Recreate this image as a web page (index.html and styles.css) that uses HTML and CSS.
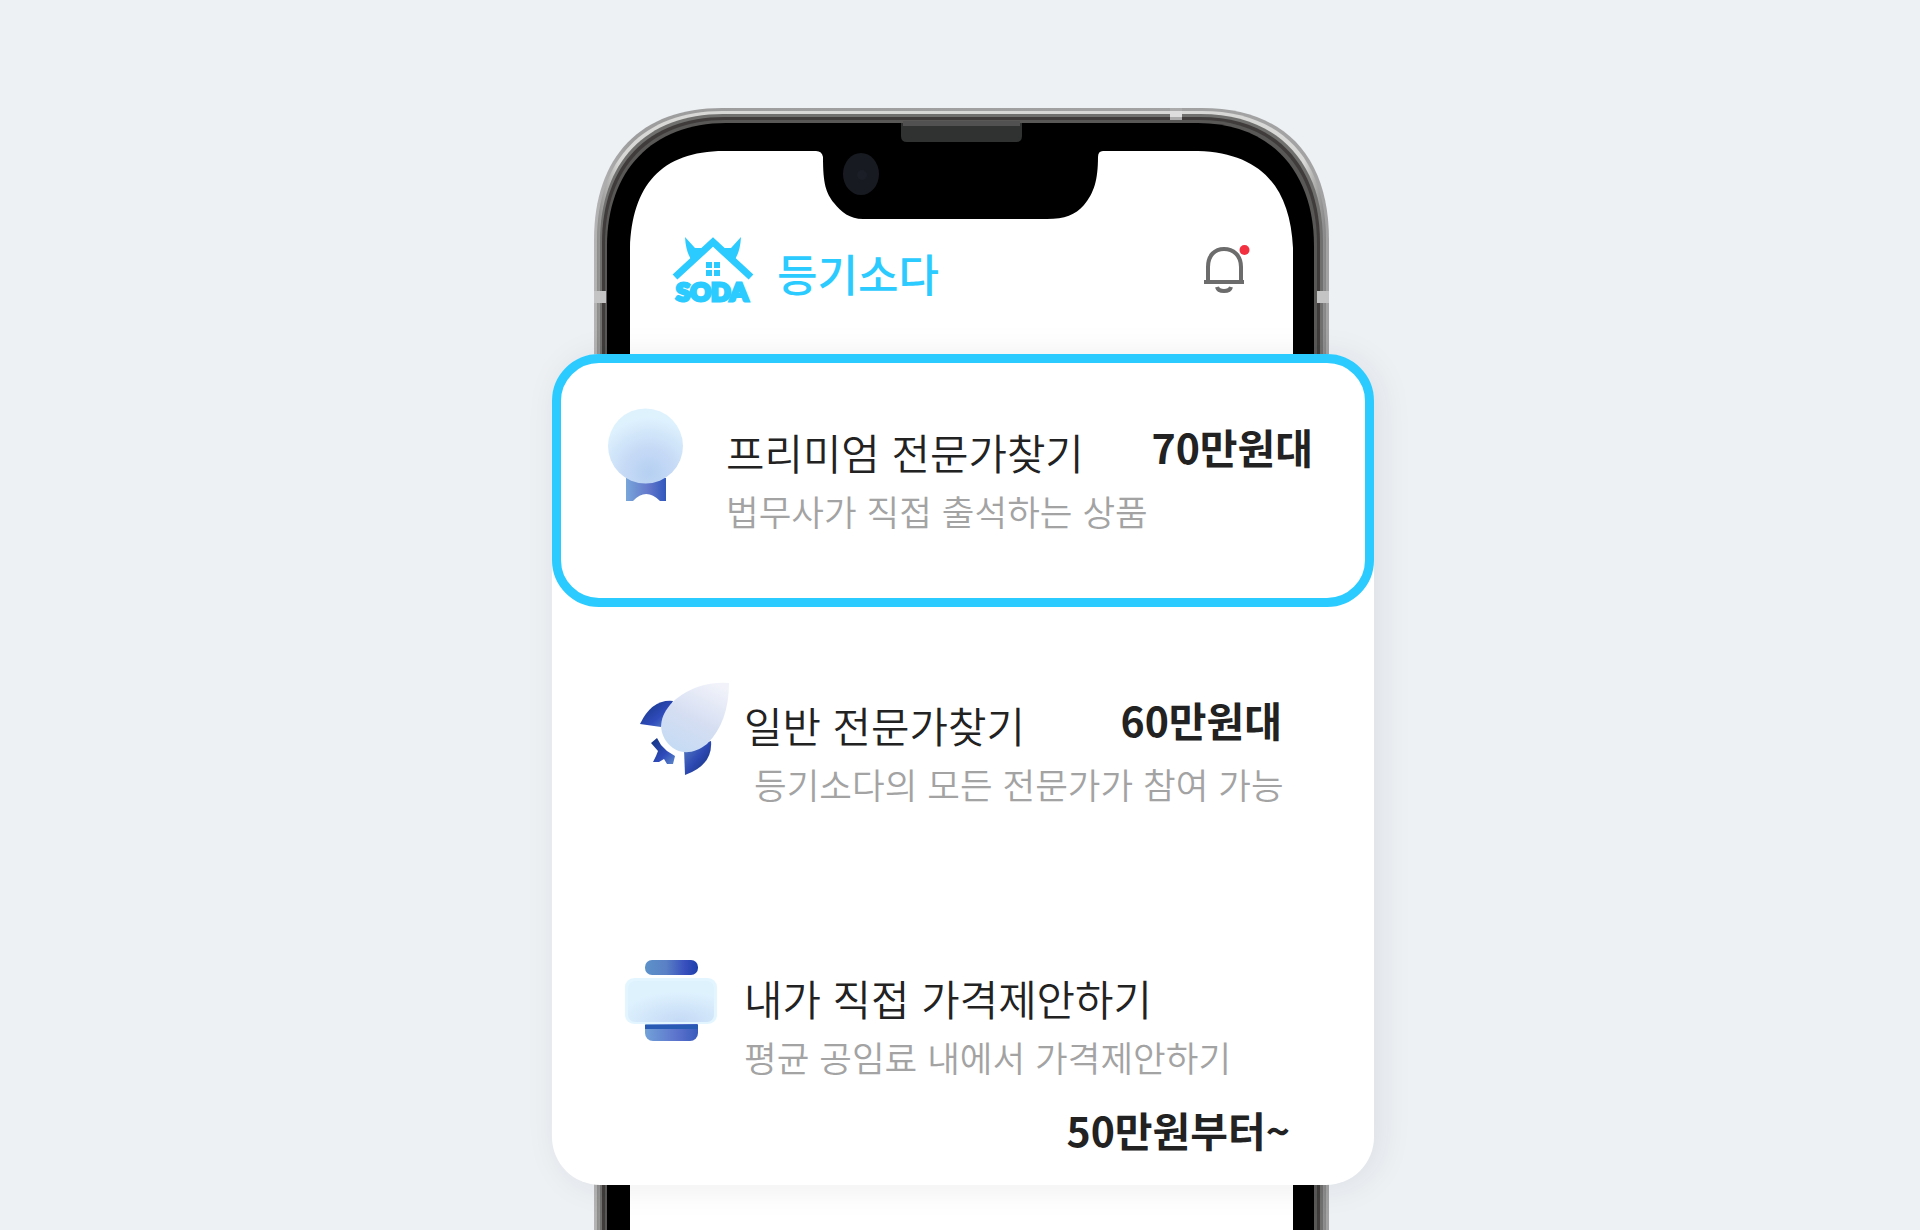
FILE: index.html
```html
<!DOCTYPE html>
<html lang="ko">
<head>
<meta charset="utf-8">
<title>등기소다</title>
<link rel="stylesheet" href="styles.css">
</head>
<body>
<main class="stage">
  <svg class="phone" viewBox="0 0 738 1122" aria-hidden="true">
    <defs>
      <linearGradient id="rim"><stop offset="0" stop-color="#b4b4b4"/><stop offset=".05" stop-color="#9d9d9e"/><stop offset="1" stop-color="#a3a3a3"/></linearGradient>
      <linearGradient id="edge"><stop offset="0" stop-color="#8d8d8c"/><stop offset=".03" stop-color="#d8d8d6"/><stop offset=".97" stop-color="#d8d8d6"/><stop offset="1" stop-color="#858585"/></linearGradient>
    </defs>
    <path fill="url(#rim)" d="M0 1300V132C0 48 47 0 128 0H608C690 0 735 48 735 132V1300Z"/>
    <path fill="url(#edge)" d="M3 1300V132C3 51 50 3 128 3H608C687 3 732 51 732 132V1300Z"/>
    <path fill="#70706e" d="M6 1300V134C6 54 52 6 129 6H607C683 6 729 54 729 134V1300Z"/>
    <path fill="#3f3c3b" d="M8 1300V135C8 57 54 9 130 9H606C682 9 726 57 726 135V1300Z"/>
    <path fill="#595857" d="M11 1300V136C11 60 56 12 131 12H605C680 12 723 60 723 136V1300Z"/>
    <path fill="#000" d="M13 1300V138C13 63 58 15 132 15H604C676 15 720 63 720 138V1300Z"/>
    <path fill="#ababab" d="M576 0h12v12h-12z"/>
    <path fill="#ddd" d="M576 3h12v6h-12z"/>
    <path fill="#c4c4c4" d="M0 183h12v12H0zM723 183h12v12h-12z"/>
    <path fill="#303131" d="M307 15H428V28Q428 34 422 34H313Q307 34 307 28Z"/>
    <path fill="#515151" d="M309 13H426V18H309Z"/>
    <path fill="#fff" d="M36 1300V140C38 78 67 43 130 43H222Q228 43 229 49C229 76 232 85 240 95C247 104 256 111 269 111H453C471 111 481 107 490 97C500 85 504 72 504 49Q504 43 509 43H604C666 45 696 78 699 140V1300Z"/>
    <ellipse cx="267" cy="66" rx="18" ry="21" fill="#171a20"/>
    <circle cx="268" cy="67" r="5" fill="#1c1e27"/>
  </svg>

  <section class="app">
    <header class="topbar">
      <svg class="logo" viewBox="0 0 84 70" aria-hidden="true">
        <path class="brand" d="M14 1L24 12H35L22 26Q15 18 14 1ZM70 1L60 12H49L62 26Q69 18 70 1Z"/>
        <path class="roof" d="M4 41L42 6L80 41"/>
        <path class="brand" d="M35 26h6v6h-6zM43 26h6v6h-6zM35 34h6v6h-6zM43 34h6v6h-6z"/>
        <text class="logo-text" x="5" y="65" textLength="72" lengthAdjust="spacingAndGlyphs">SODA</text>
      </svg>
      <h1 class="app-name">등기소다</h1>
      <svg class="bell" viewBox="0 0 50 52" aria-hidden="true">
        <path d="M6 38V23C6 11 13 5 22 5S39 11 39 23V38M2 38H42M15 43Q16 47 22 47T29 43"/>
        <circle cx="42.500" cy="6" r="5"/>
      </svg>
    </header>

    <ul class="card">
      <li class="offer offer-premium">
        <svg class="icon medal" viewBox="0 0 78 96" aria-hidden="true">
          <defs>
            <radialGradient id="disc" cx=".55" cy=".86" r=".75"><stop offset="0" stop-color="#b5d0f2"/><stop offset=".45" stop-color="#c6daf6"/><stop offset="1" stop-color="#def2fe"/></radialGradient>
            <linearGradient id="ribbon"><stop offset="0" stop-color="#78a6da"/><stop offset=".55" stop-color="#6478cb"/><stop offset="1" stop-color="#3158bd"/></linearGradient>
          </defs>
          <path fill="url(#ribbon)" d="M18 70H58V93H52Q38 79 25 93H18Z"/>
          <circle cx="37.500" cy="38" r="37.500" fill="url(#disc)"/>
        </svg>
        <div class="info">
          <div class="head"><h2 class="title">프리미엄 전문가찾기</h2><strong class="price">70만원대</strong></div>
          <p class="desc">법무사가 직접 출석하는 상품</p>
        </div>
      </li>

      <li class="offer offer-standard">
        <svg class="icon rocket" viewBox="0 0 92 96" aria-hidden="true">
          <defs>
            <linearGradient id="hull" x1=".8" y1="0" x2=".3" y2="1"><stop offset="0" stop-color="#f2f3fa"/><stop offset=".55" stop-color="#d5def2"/><stop offset="1" stop-color="#c5dbf4"/></linearGradient>
            <linearGradient id="fin" x1="0" y1="0" x2="1" y2="1"><stop offset="0" stop-color="#12347e"/><stop offset=".6" stop-color="#2f4bbb"/><stop offset="1" stop-color="#5f8ac9"/></linearGradient>
            <linearGradient id="fin2" x1="1" y1="1" x2="0" y2="0"><stop offset="0" stop-color="#122f70"/><stop offset=".5" stop-color="#2d49b3"/><stop offset="1" stop-color="#5a82c2"/></linearGradient>
          </defs>
          <path fill="url(#fin)" d="M1 43Q13 18 34 20L22 46Z"/>
          <path fill="url(#fin2)" d="M45 68L72 60Q74 84 46 94Z"/>
          <path fill="url(#fin)" d="M18 57L22 64L28 70L36 75L34 83H28L25 78L20 81L14 81L17 75L19 70L12 62Z"/>
          <path fill="url(#hull)" d="M90 2Q60 0 37 18C20 33 19 48 27 60C38 75 54 74 68 63Q90 41 90 2Z"/>
        </svg>
        <div class="info">
          <div class="head"><h2 class="title">일반 전문가찾기</h2><strong class="price">60만원대</strong></div>
          <p class="desc desc-inset">등기소다의 모든 전문가가 참여 가능</p>
        </div>
      </li>

      <li class="offer offer-custom">
        <svg class="icon printer" viewBox="0 0 93 83" aria-hidden="true">
          <defs>
            <linearGradient id="bar"><stop offset="0" stop-color="#5c92ca"/><stop offset=".4" stop-color="#5a80c5"/><stop offset=".75" stop-color="#3850bd"/><stop offset="1" stop-color="#1c3fac"/></linearGradient>
            <radialGradient id="panel" cx=".6" cy="1" r=".75"><stop offset="0" stop-color="#c4d9f5"/><stop offset="1" stop-color="#def2fe"/></radialGradient>
            <linearGradient id="tray"><stop offset="0" stop-color="#72a2d8"/><stop offset=".6" stop-color="#5c73cc"/><stop offset="1" stop-color="#395bbd"/></linearGradient>
          </defs>
          <rect x="20" y="0" width="53" height="15" rx="7" fill="url(#bar)"/>
          <rect x="20" y="58" width="53" height="23" rx="8" fill="url(#tray)"/>
          <path fill="#285ab3" d="M20 65h53v4H20z"/>
          <rect x="0" y="18" width="92" height="46" rx="9" fill="#e3f6ff"/>
          <rect x="3" y="21" width="86" height="41" rx="7" fill="url(#panel)"/>
        </svg>
        <div class="info">
          <h2 class="title">내가 직접 가격제안하기</h2>
          <p class="desc">평균 공임료 내에서 가격제안하기</p>
          <strong class="price">50만원부터~</strong>
        </div>
      </li>
    </ul>
  </section>
</main>
</body>
</html>
```
FILE: styles.css
```css
* {
  box-sizing: border-box;
  margin: 0;
  padding: 0;
}

body {
  height: 1230px;
  overflow: hidden;
  background: #edf1f4;
  color: #222;
  font-family: "Noto Sans CJK KR", sans-serif;
}

.stage {
  display: grid;
  grid-template-columns: 822px;
  height: 1230px;
  padding-left: 552px;
}

.phone,
.app {
  grid-area: 1 / 1;
}

.phone {
  width: 738px;
  height: 1122px;
  margin: 108px 0 0 42px;
}

.app {
  display: flex;
  flex-direction: column;
}

.topbar {
  display: flex;
  align-items: flex-start;
  height: 354px;
  padding: 236px 122px 0 119px;
}

.logo {
  width: 84px;
  height: 70px;
}

.brand,
.logo-text {
  fill: #2bcbff;
}

.roof {
  fill: none;
  stroke: #2bcbff;
  stroke-width: 7;
}

.logo-text {
  stroke: #2bcbff;
  stroke-width: 3;
  font: 900 24px Lato, sans-serif;
}

.app-name {
  margin: 5px auto 0 22px;
  color: #2bcbff;
  font-size: 44px;
  font-weight: 500;
  line-height: 64px;
}

.bell {
  width: 50px;
  height: 52px;
  margin-top: 8px;
}

.bell path {
  fill: none;
  stroke: #6c6c6c;
  stroke-width: 4;
}

.bell circle {
  fill: #f2303f;
}

.card {
  height: 831px;
  border-radius: 48px;
  background: #fff;
  box-shadow: 6px 2px 34px rgba(40, 20, 50, 0.08);
  list-style: none;
}

.offer {
  display: flex;
  align-items: flex-start;
}

.offer-premium {
  height: 253px;
  padding: 45px 52px 0 47px;
  border: 9px solid #2bcbff;
  border-radius: 47px;
}

.offer-standard {
  height: 273px;
  padding: 74px 92px 0 87px;
}

.offer-custom {
  padding: 80px 84px 0 73px;
}

.icon {
  flex: none;
}

.medal {
  width: 78px;
  height: 96px;
}

.rocket {
  width: 92px;
  height: 96px;
}

.printer {
  width: 93px;
  height: 83px;
}

.info {
  display: flex;
  flex: 1;
  flex-direction: column;
  min-width: 0;
}

.offer-premium .info {
  padding: 14px 0 0 40px;
}

.offer-standard .info {
  padding: 14px 0 0 13px;
}

.offer-custom .info {
  padding: 8px 0 0 26px;
}

.head {
  display: flex;
  justify-content: space-between;
}

.title {
  font-size: 41.8px;
  font-weight: 350;
  line-height: 60px;
  white-space: nowrap;
}

.price {
  margin-top: -6px;
  font-size: 41px;
  font-weight: 700;
  line-height: 60px;
  white-space: nowrap;
}

.desc {
  margin-top: 5px;
  color: #a3a3a3;
  font-size: 35.5px;
  font-weight: 350;
  line-height: 48px;
  white-space: nowrap;
}

.desc-inset {
  padding-left: 10px;
}

.offer-custom .price {
  align-self: flex-end;
  margin-top: 18px;
}
```
